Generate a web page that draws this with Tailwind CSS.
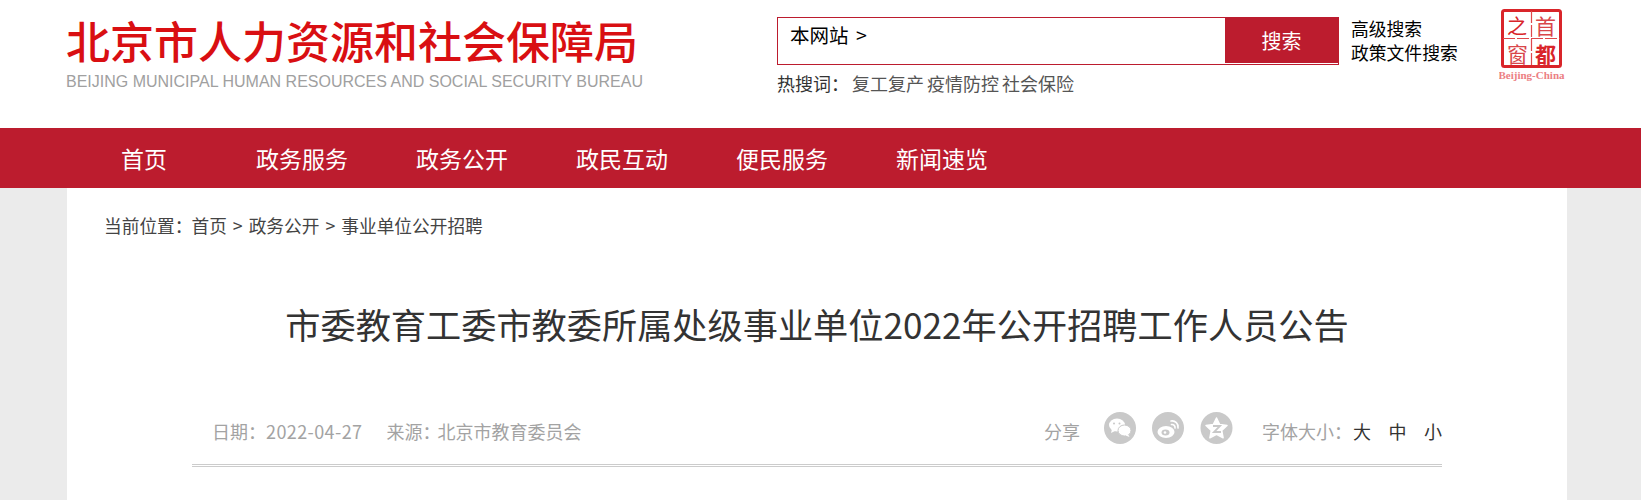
<!DOCTYPE html>
<html lang="zh">
<head>
<meta charset="utf-8">
<script src="https://cdn.jsdelivr.net/npm/@tailwindcss/browser@4"></script>
</head>
<body class="bg-[#ebebeb] font-['Noto_Sans_CJK_SC','Liberation_Sans',sans-serif] overflow-hidden h-[500px]">
<header class="bg-white h-[128px] flex">
  <div class="w-[711px] ml-[66px] pt-[14px]">
    <div class="text-[44px] leading-[52px] font-medium text-[#d90f12] whitespace-nowrap">北京市人力资源和社会保障局</div>
    <div class="text-[16px] leading-[20px] mt-[6px] text-[#a0a0a0] whitespace-nowrap font-['Liberation_Sans',sans-serif]">BEIJING MUNICIPAL HUMAN RESOURCES AND SOCIAL SECURITY BUREAU</div>
  </div>
  <div class="w-[562px] pt-[17px]">
    <div class="h-[48px] border border-[#bc1c2e] flex">
      <div class="flex-1 pl-[12px] text-[19.5px] leading-[34px] text-black">本网站 <span class="ml-[3px]">&gt;</span></div>
      <div class="w-[113px] h-[45px] bg-[#bc1c2e] text-white text-[20px] leading-[46px] text-center">搜索</div>
    </div>
    <div class="mt-[7px] text-[18px] leading-[22px] text-[#333] flex">
      <span class="w-[75px] whitespace-nowrap">热搜词：</span>
      <span class="text-[#555] flex gap-[3px]"><span>复工复产</span><span>疫情防控</span><span>社会保险</span></span>
    </div>
  </div>
  <div class="pl-[12px] pt-[16px] w-[160px] text-[17.8px] leading-[24px] text-black">
    <div>高级搜索</div>
    <div>政策文件搜索</div>
  </div>
  <svg class="mt-[8px]" width="72" height="76" viewBox="0 0 72 76">
    <rect x="3.500" y="2.500" width="58" height="56" rx="2" fill="none" stroke="#d9252a" stroke-width="3"/>
    <path d="M32.500 3V58M4 30.500H61" stroke="#e0474b" stroke-width="1.200" stroke-dasharray="12 2"/>
    <text x="8" y="26" font-size="20" fill="#d9252a" font-family="Noto Sans CJK SC">之</text>
    <text x="36" y="26" font-size="21" fill="#d9474b" font-family="Noto Sans CJK SC">首</text>
    <text x="8" y="54" font-size="21" fill="#d9474b" font-family="Noto Sans CJK SC">窗</text>
    <text x="36" y="54" font-size="21" font-weight="700" fill="#d9252a" font-family="Noto Sans CJK SC">都</text>
    <text x="32.500" y="71" font-size="11" font-weight="700" text-anchor="middle" fill="#ec8083" font-family="Liberation Serif">Beijing-China</text>
  </svg>
</header>
<nav class="bg-[#bc1c2e] h-[60px] flex text-white text-[23px] leading-[60px] pl-[121px]">
  <a class="w-[135px]">首页</a>
  <a class="w-[160px]">政务服务</a>
  <a class="w-[160px]">政务公开</a>
  <a class="w-[160px]">政民互动</a>
  <a class="w-[160px]">便民服务</a>
  <a class="w-[160px]">新闻速览</a>
</nav>
<main class="bg-white ml-[67px] w-[1500px] h-[312px] pt-[25px]">
  <div class="pl-[37px] text-[17.7px] leading-[24px] text-[#444] flex gap-[6px]">
    <span class="mr-[-7px]">当前位置：</span><span>首页</span><span>&gt;</span><span>政务公开</span><span>&gt;</span><span>事业单位公开招聘</span>
  </div>
  <h1 class="mt-[62px] text-center text-[35.2px] leading-[50px] text-[#333] font-normal whitespace-nowrap">市委教育工委市教委所属处级事业单位2022年公开招聘工作人员公告</h1>
  <div class="mx-[125px] mt-[65px] h-[53px] border-b-[3px] border-double border-[#cccccc] flex items-start pl-[20px] text-[18px] leading-[34px] text-[#a3a3a3]">
    <span class="mr-[24px]">日期：<span class="tracking-[0.4px]">2022-04-27</span></span>
    <span class="flex-1">来源：<span class="ml-[-3px]">北京市教育委员会</span></span>
    <span class="mr-[24px]">分享</span>
    <span class="flex gap-[16px] mr-[29px] mt-[-2px]">
      <svg width="32" height="32" viewBox="0 0 32 32"><circle cx="16" cy="16" r="16" fill="#c9c9c9"/><ellipse cx="13" cy="13" rx="8" ry="6.500" fill="#fff"/><path d="M8 17l-1 4 4-2z" fill="#fff"/><ellipse cx="20.500" cy="18.500" rx="6.500" ry="5.500" fill="#fff" stroke="#c9c9c9"/><path d="M24 22l1.500 3-4-1.500z" fill="#fff"/><circle cx="10" cy="11.500" r="1" fill="#c9c9c9"/><circle cx="15.500" cy="11.500" r="1" fill="#c9c9c9"/></svg>
      <svg width="32" height="32" viewBox="0 0 32 32"><circle cx="16" cy="16" r="16" fill="#c9c9c9"/><ellipse cx="14" cy="20" rx="8.500" ry="6" fill="#fff"/><ellipse cx="13.500" cy="20.500" rx="4" ry="3" fill="#c9c9c9"/><circle cx="13" cy="20.500" r="1.300" fill="#fff"/><path d="M19 9a6 6 0 0 1 7 7M19.500 12.500a3 3 0 0 1 3.500 3.500" fill="none" stroke="#fff" stroke-width="1.600" stroke-linecap="round"/></svg>
      <svg width="33" height="32" viewBox="0 0 33 32"><circle cx="16.500" cy="16" r="16" fill="#c9c9c9"/><path d="M16.500 6l3.200 6.500 7.300 1-5.300 5 1.400 7.300-6.600-3.500-6.600 3.500 1.400-7.300-5.300-5 7.300-1z" fill="#fff" stroke="#fff" stroke-width="1.500" stroke-linejoin="round"/><path d="M13 14h7l-6 6h7" fill="none" stroke="#c9c9c9" stroke-width="1.800"/></svg>
    </span>
    <span class="mr-[1px]">字体大小：</span>
    <span class="text-[#333] flex gap-[17.500px]"><span>大</span><span>中</span><span>小</span></span>
  </div>
</main>
</body>
</html>
